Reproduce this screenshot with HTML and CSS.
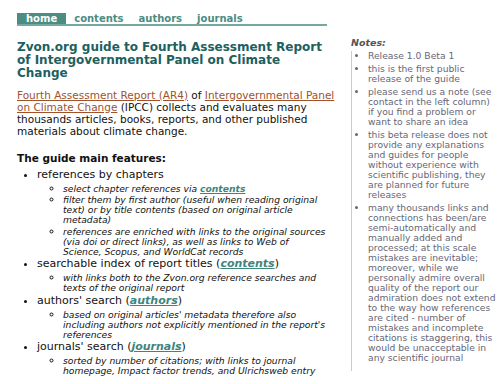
FILE: index.html
```html
<!DOCTYPE html>
<html lang="en">
<head>
    <meta charset="UTF-8">
    <title>Zvon.org guide to AR4</title>
    <link rel="stylesheet" href="styles.css">
</head>
<body>
    <div class="page">
        <div class="main">
            <ul class="nav">
                <li class="current">home</li>
                <li><a href="#">contents</a></li>
                <li><a href="#">authors</a></li>
                <li><a href="#">journals</a></li>
            </ul>
            <h1>Zvon.org guide to Fourth Assessment Report of Intergovernmental Panel on Climate Change</h1>
            <p class="intro"><a class="ext" href="#">Fourth Assessment Report (AR4)</a> of <a class="ext" href="#">Intergovernmental Panel on Climate Change</a> (IPCC) collects and evaluates many thousands articles, books, reports, and other published materials about climate change.</p>
            <h2>The guide main features:</h2>
            <ul class="features">
                <li>references by chapters
                    <ul>
                        <li>select chapter references via <a href="#">contents</a></li>
                        <li>filter them by first author (useful when reading original text) or by title contents (based on original article metadata)</li>
                        <li>references are enriched with links to the original sources (via doi or direct links), as well as links to Web of Science, Scopus, and WorldCat records</li>
                    </ul>
                </li>
                <li>searchable index of report titles (<a href="#">contents</a>)
                    <ul>
                        <li>with links both to the Zvon.org reference searches and texts of the original report</li>
                    </ul>
                </li>
                <li>authors' search (<a href="#">authors</a>)
                    <ul>
                        <li>based on original articles' metadata therefore also including authors not explicitly mentioned in the report's references</li>
                    </ul>
                </li>
                <li>journals' search (<a href="#">journals</a>)
                    <ul>
                        <li>sorted by number of citations; with links to journal homepage, Impact factor trends, and Ulrichsweb entry</li>
                    </ul>
                </li>
            </ul>
        </div>
        <div class="side">
            <div class="notes-title">Notes:</div>
            <ul class="notes">
                <li>Release 1.0 Beta 1</li>
                <li>this is the first public release of the guide</li>
                <li>please send us a note (see contact in the left column) if you find a problem or want to share an idea</li>
                <li>this beta release does not provide any explanations and guides for people without experience with scientific publishing, they are planned for future releases</li>
                <li>many thousands links and connections has been/are semi-automatically and manually added and processed; at this scale mistakes are inevitable; moreover, while we personally admire overall quality of the report our admiration does not extend to the way how references are cited - number of mistakes and incomplete citations is staggering, this would be unacceptable in any scientific journal</li>
            </ul>
        </div>
    </div>
</body>
</html>
```

FILE: styles.css
```css
*{
    margin: 0;
    padding: 0;
}
body{
    font-family: "DejaVu Sans", Verdana, sans-serif;
    color: #111;
    background: #fff;
}
.page{
    display: flex;
    padding: 13px 0 0 17px;
}
.main{
    width: 310px;
    flex-shrink: 0;
}
.nav{
    list-style: none;
    display: flex;
    border-bottom: 2px solid #74a8a0;
    font-size: 10px;
    font-weight: bold;
    line-height: 11px;
}
.nav li{
    padding: 0 7px 0 8px;
}
.nav li.current{
    background-color: #4b8c83;
    color: #fff;
    padding: 0 9px 0 9px;
}
.nav a{
    color: #4b8c83;
    text-decoration: none;
}
h1{
    font-size: 12px;
    line-height: 13px;
    color: #1d6060;
    margin: 14.5px 0 9px 0;
}
.intro{
    font-size: 10.5px;
    line-height: 12px;
    margin-right: -10px;
}
a.ext{
    color: #a0522d;
}
h2{
    font-size: 10.5px;
    margin: 15px 0 5px 0;
    line-height: 12px;
}
.features{
    list-style: disc;
    padding-left: 20px;
    font-size: 11px;
    line-height: 12px;
}
.features > li{
    margin-bottom: 1px;
}
.features a{
    color: #3f857b;
    font-weight: bold;
    font-style: italic;
}
.features ul{
    list-style: circle;
    padding-left: 26px;
    margin-top: 3px;
    font-size: 9.2px;
    line-height: 10px;
    font-style: italic;
}
.features ul li{
    margin-bottom: 1.5px;
}
.side{
    margin-left: 17px;
    width: 152px;
    color: #667;
    font-size: 9.2px;
}
.notes-title{
    font-weight: bold;
    font-style: italic;
    font-size: 9.5px;
    margin: 24px 0 3px 7px;
    color: #555;
}
.notes{
    border-left: 1px solid #ccc;
    margin-left: 7px;
    padding: 0 0 5px 16px;
    line-height: 10px;
}
.notes li{
    margin-bottom: 3px;
}
```
